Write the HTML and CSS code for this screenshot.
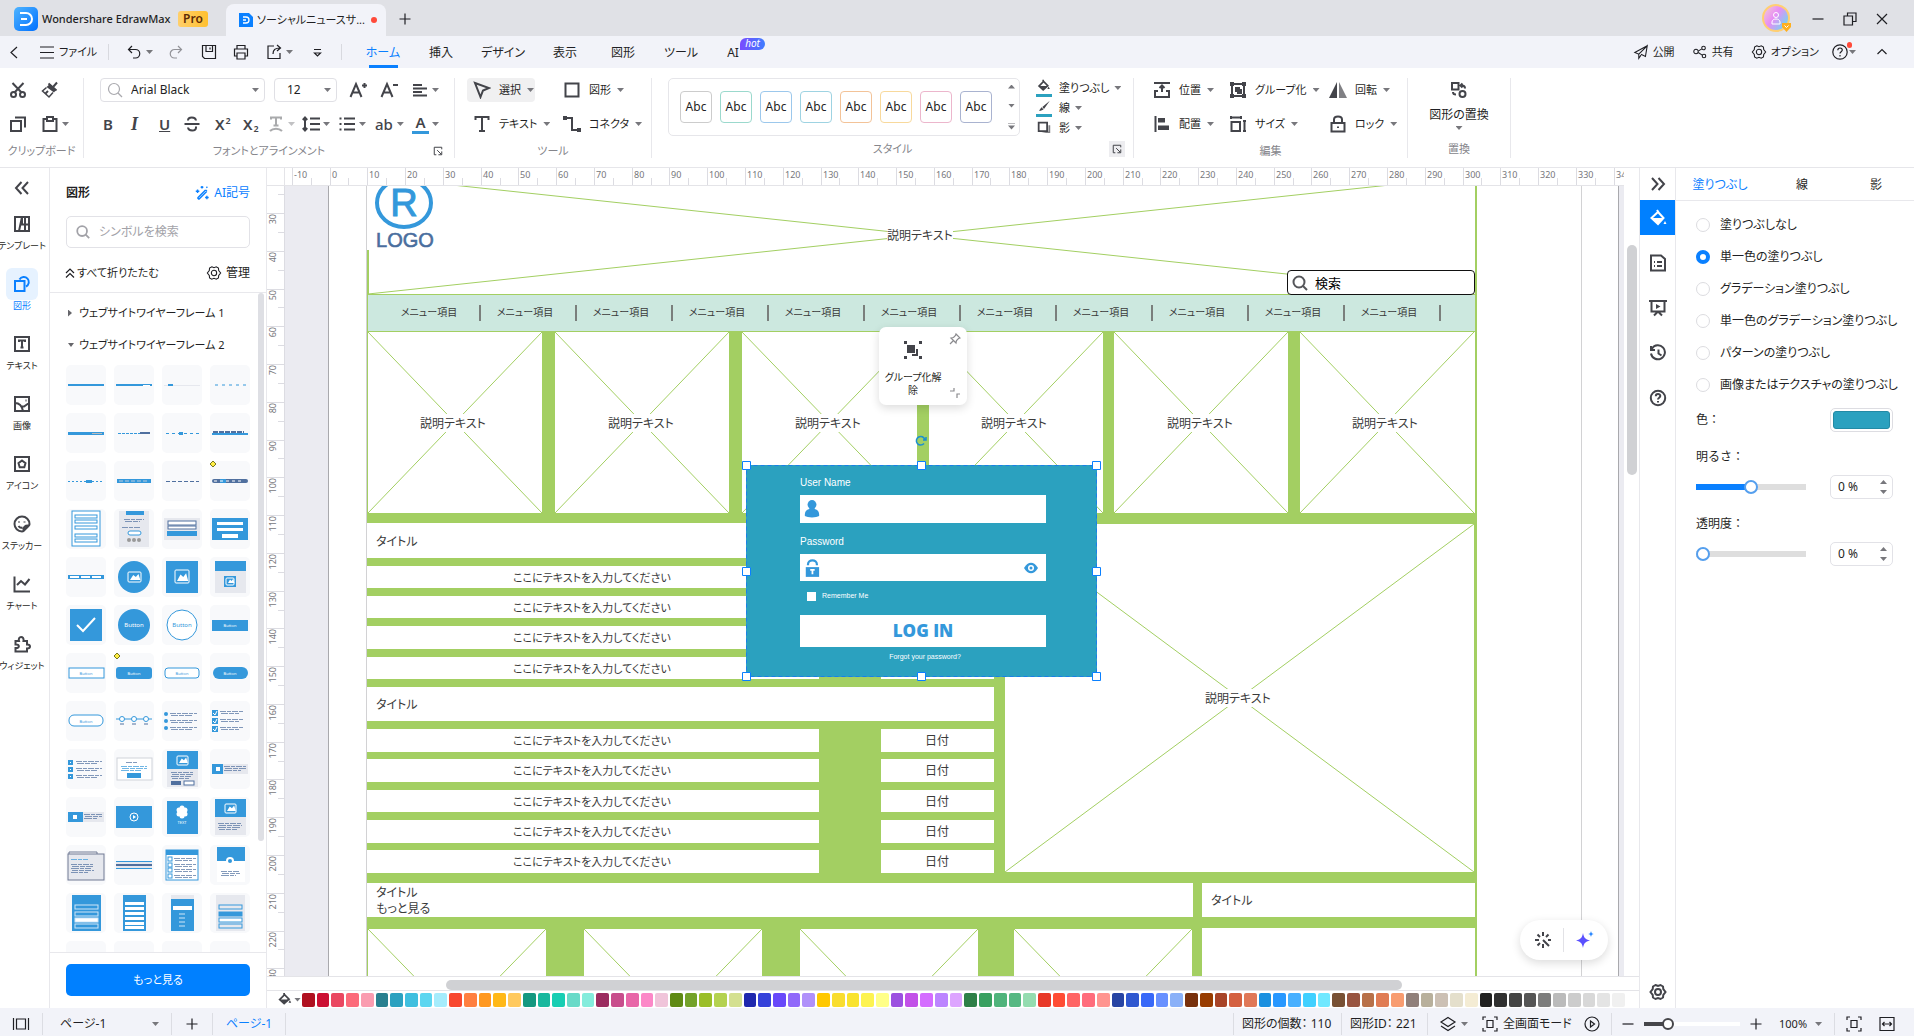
FILE: index.html
```html
<!DOCTYPE html>
<html lang="ja">
<head>
<meta charset="utf-8">
<title>Wondershare EdrawMax</title>
<link rel="stylesheet" href="styles.css">
</head>
<body>
<svg class="sprite" aria-hidden="true">
  <symbol id="back" viewBox="0 0 18 18"><path d="M12 4 6 9.500 12 15"/></symbol>
  <symbol id="menu" viewBox="0 0 18 18"><path d="M2 4h14M2 9.500h14M2 15h14"/></symbol>
  <symbol id="undo" viewBox="0 0 18 18"><path d="M7 3 3.500 6.500 7 10M4 6.500h6.500a4 4 0 0 1 0 8.500H8"/></symbol>
  <symbol id="redo" viewBox="0 0 18 18"><path d="M11 3l3.500 3.500L11 10M14 6.500H7.500a4 4 0 0 0 0 8.500H10"/></symbol>
  <symbol id="save" viewBox="0 0 18 18"><path d="M2.500 2.500h13v13h-11l-2-2zM6 2.500v6h6.500v-6M10 4.500v2"/></symbol>
  <symbol id="print" viewBox="0 0 18 18"><path d="M5 6V2.500h8V6M5 13H2.500V6h13v7H13M5 10h8v6H5z"/></symbol>
  <symbol id="export" viewBox="0 0 18 18"><path d="M9 3H3v12.500h12V10M8 11c0-4 2-6 7-6M12 2l3.500 3L12 8"/></symbol>
  <symbol id="more" viewBox="0 0 18 18"><path d="M6 6.500h7M6.500 10 9.500 13l3-3z"/></symbol>
  <symbol id="send" viewBox="0 0 18 18"><path d="M16 2 2 9.500l4.500 2L16 2l-2 12-5-2.500M6.500 11.500V16L9 12.500"/></symbol>
  <symbol id="share" viewBox="0 0 18 18"><circle cx="4.500" cy="8.500" r="2.500"/><circle cx="13" cy="4.500" r="2"/><circle cx="13.500" cy="13.500" r="2"/><path d="M7 8l4-2.500M7 9.500l4.500 3"/></symbol>
  <symbol id="gear" viewBox="0 0 18 18"><path d="M6.500 2 9 3l2.500-1 2.500 1.500.300 2.700L16.500 9l-2.200 2.800-.300 2.700-2.500 1.500L9 15l-2.500 1L4 14.500l-.300-2.700L1.500 9l2.200-2.800L4 3.500z"/><circle cx="9" cy="9" r="3"/></symbol>
  <symbol id="help" viewBox="0 0 18 18"><circle cx="9" cy="9" r="7.200"/><path d="M6.800 7.300c0-3 4.500-3 4.500-.2 0 1.700-2.300 1.600-2.300 3.400M9 12v1.500"/></symbol>
  <symbol id="up" viewBox="0 0 18 18"><path d="M4.500 11 9 6.500 13.500 11"/></symbol>
  <symbol id="cut" viewBox="0 0 18 18"><path d="M3.500 2 12.500 11.500M14.500 2 5.500 11.500"/><circle cx="4.500" cy="13.500" r="2.500"/><circle cx="13.500" cy="13.500" r="2.500"/></symbol>
  <symbol id="brush" viewBox="0 0 18 18"><path d="M16 1.500 12.500 5.500M7.500 2.500l8 7"/><path class="solid" d="M5.500 6 9 3l6 6-2 2.500z"/><path d="M5.500 6.500 1.500 10 8 16l4-4.500" stroke-width="1.500"/><path d="M4.500 12.500 7 10"/></symbol>
  <symbol id="copy" viewBox="0 0 18 18"><path d="M2 6h10v10H2zM6 2.500h10v10"/></symbol>
  <symbol id="paste" viewBox="0 0 18 18"><path d="M5.500 4H2.500v12h13V4h-3"/><path d="M6 2h6v4H6z"/></symbol>
  <symbol id="search" viewBox="0 0 18 18"><circle cx="8" cy="8" r="5.500"/><path d="m12 12 4 4"/></symbol>
  <symbol id="aup" viewBox="0 0 18 18"><path d="M1.500 16 7 3l5.500 13M3.500 11.500h7M13 4.500h5M15.500 2v5"/></symbol>
  <symbol id="adown" viewBox="0 0 18 18"><path d="M1.500 16 7 3l5.500 13M3.500 11.500h7M13 4h5"/></symbol>
  <symbol id="align" viewBox="0 0 18 18"><path d="M2 4h9M2 7.500h14M2 11h9M2 14.500h14"/></symbol>
  <symbol id="strike" viewBox="0 0 18 18"><path d="M1.500 9h15M13 5.500c-.5-4-8-4-8 0M5 12.500c.5 4 8 4 8 0V11.500"/></symbol>
  <symbol id="tcurve" viewBox="0 0 18 18"><path d="M4 4.500V2.500h10v2M9 2.500v8M6.500 10.500h5M3 16c3-3 9-3 12 0"/></symbol>
  <symbol id="lineh" viewBox="0 0 18 18"><path d="M8 3.500h10M8 9h10M8 14.500h10M3 3v12M.8 5 3 2.500 5.200 5M.8 13 3 15.500 5.200 13"/></symbol>
  <symbol id="list" viewBox="0 0 18 18"><path d="M6 3.500h11M6 9h11M6 14.500h11M1.500 3.500h2M1.500 9h2M1.500 14.500h2"/></symbol>
  <symbol id="cursor" viewBox="0 0 18 18"><path d="M2 2l14 5-6 2.500L7.500 16z"/></symbol>
  <symbol id="rect" viewBox="0 0 18 18"><path d="M2.500 2.500h13v13h-13z"/></symbol>
  <symbol id="bigt" viewBox="0 0 18 18"><path d="M2.500 5V2h13v3M9 2v14M6 16h6"/></symbol>
  <symbol id="conn" viewBox="0 0 18 18"><path d="M2 3h7v12h6"/><path class="solid" d="M0 1h4v4H0zM14 13h4v4h-4z"/></symbol>
  <symbol id="bucket" viewBox="0 0 18 18"><path d="M8 1v3M3 8.500 8.500 3l5 5-5.500 5z"/><path class="solid" d="M3.500 8.500H13L8 13zM14.500 9l1.500 3h-3z"/></symbol>
  <symbol id="pen" viewBox="0 0 18 18"><path class="solid" d="M16 2 7 9.500 9 12zM6 10l2.500 2.500L5 14H3z"/></symbol>
  <symbol id="shadow" viewBox="0 0 18 18"><path class="dim" d="M6 14.500h10V6h-2v7z"/><path d="M3 3h9.500v9.500H3z"/></symbol>
  <symbol id="place" viewBox="0 0 18 18"><path d="M1 2h16M9 11V5M6.500 7 9 4.500 11.500 7M5 10H2v6h14v-6h-3"/></symbol>
  <symbol id="alignl" viewBox="0 0 18 18"><path d="M2.500 1v16"/><path class="solid" d="M5 3h7v4.500H5zM5 10.500h11V15H5z"/></symbol>
  <symbol id="group" viewBox="0 0 18 18"><path d="M3 3h12v12H3z"/><path class="solid" d="M6 6h5v5H6zM1 1h4v4H1zM13 1h4v4h-4zM1 13h4v4H1zM13 13h4v4h-4z"/><path d="M12 8v4H8"/></symbol>
  <symbol id="ungroup" viewBox="0 0 18 18"><path class="solid" d="M3 4h8v8H3zM0 0h3v3H0zM15 0h3v3h-3zM0 15h3v3H0zM15 15h3v3h-3z"/><path d="M13 8v6H8"/></symbol>
  <symbol id="size" viewBox="0 0 18 18"><path d="M2.500 7h8.500v9H2.500zM2 2.500h10M2 1v3M12 1v3M15.500 6v10M14 6h3M14 16h3"/></symbol>
  <symbol id="flip" viewBox="0 0 18 18"><path class="solid" d="M8 1v16H0z"/><path class="dim" d="M10 1v16h8z"/></symbol>
  <symbol id="lock" viewBox="0 0 18 18"><path d="M2.500 8h13v8.500h-13zM5 8V4.500c0-4 8-4 8 0V8M9 11.500v1.500"/></symbol>
  <symbol id="swap" viewBox="0 0 18 18"><path d="M2 2h6.500v6.500H2zM12 4.500c2 0 3 1 3 3M12.500 2.500 10.500 4.500l2 2M6 13.500c-2 0-3-1-3-2.500"/><circle cx="12.500" cy="13" r="3"/></symbol>
  <symbol id="launch" viewBox="0 0 12 12"><path d="M10.500 4V1.500h-9v9H4M5 5l5 5M10.500 6.500v4h-4"/></symbol>
  <symbol id="dleft" viewBox="0 0 18 18"><path d="M8.500 3 3 9l5.500 6M15 3 9.500 9l5.500 6"/></symbol>
  <symbol id="dright" viewBox="0 0 18 18"><path d="M3 3l5.500 6L3 15M9.500 3 15 9l-5.500 6"/></symbol>
  <symbol id="dup" viewBox="0 0 12 12"><path d="M2 6l4-4 4 4M2 10.500l4-4 4 4"/></symbol>
  <symbol id="tmpl" viewBox="0 0 18 18"><path d="M2 2h14v14H2zM9 2 6 16M9 2.500V9M12 2v14M8 9.500h8"/></symbol>
  <symbol id="shapes" viewBox="0 0 18 18"><path d="M2 6h9.500v10H2z"/><path d="M6.500 4.500A5 5 0 1 1 13 11.500"/></symbol>
  <symbol id="text" viewBox="0 0 18 18"><path d="M2 2h14v14H2zM6 7V5.500h6V7M9 5.500v6.500M7.500 12.500h3"/></symbol>
  <symbol id="image" viewBox="0 0 18 18"><path d="M2 2h14v14H2zM2 8c4 0 7 3 8 8M8 11.500l3 0 5-3.500M12.500 5.500h1"/></symbol>
  <symbol id="icon" viewBox="0 0 18 18"><path d="M2 2h14v14H2zM9 5.500l3.500 2.700-1.200 4H6.700l-1.200-4z"/></symbol>
  <symbol id="sticker" viewBox="0 0 18 18"><path d="M16.500 9A7.500 7.500 0 1 0 9 16.500c1 0 1.500-.500 1.500-1.500 0-3 1.500-4.500 4.500-4.500 1 0 1.500-.500 1.500-1.500zM10.500 16 16 10.500M6 6.500v1M11.500 6.500v1M5.500 11c1 1.500 2.500 2 4 1.500"/></symbol>
  <symbol id="chart" viewBox="0 0 18 18"><path d="M1.500 1.500v15H17M4 10l4-4 4 3.500L16.500 4"/></symbol>
  <symbol id="puzzle" viewBox="0 0 18 18"><path d="M2.500 6H6c-1.500-5.500 5.500-5.500 4.500 0H14v3.500c4 0 4 4 0 4V16.500H2.500V13c4.500.500 4.500-4 0-3.500z"/></symbol>
  <symbol id="wand" viewBox="0 0 18 18"><path d="m4 14.500 9-9M5.500 16l9-9M13 5.500 14.500 7M4 14.500 5.500 16M4 5v4M2 7h4M14.500 12v4M12.500 14h4M9 1v3M7.500 2.500h3M14 2l1 1"/></symbol>
  <symbol id="fillw" viewBox="0 0 18 18"><path d="M2.500 9 9 3l5.500 6L9 15zM8 1l2 3"/><path class="solid" d="M3 9h11.500L9 15zM16 12l1.500 3h-3z"/></symbol>
  <symbol id="doc" viewBox="0 0 18 18"><path d="M2 1.500h10L16 5v11.500H2zM5 8h1M8 8h5M5 12h1M8 12h5"/></symbol>
  <symbol id="present" viewBox="0 0 18 18"><path d="M0 2h18M2.500 2v10.500h13V2M9 12.500l-4 4M9 12.500l4 4"/><path class="solid" d="M7 5l4.500 2.500L7 10z"/></symbol>
  <symbol id="history" viewBox="0 0 18 18"><path d="M3 4.500a7 7 0 1 1-1 5M2 2v4h4M9.500 5.500v4l3 2"/></symbol>
  <symbol id="pages" viewBox="0 0 18 18"><path d="M1.500 3v12M16.500 3v12M4.500 4h9v10h-9z"/></symbol>
  <symbol id="plus" viewBox="0 0 18 18"><path d="M9 3.500v11M3.500 9h11"/></symbol>
  <symbol id="minus" viewBox="0 0 18 18"><path d="M3.500 9h11"/></symbol>
  <symbol id="layers" viewBox="0 0 18 18"><path d="M9 2.500 16 7l-7 4.500L2 7zM2 11l7 4.500 7-4.500"/></symbol>
  <symbol id="fit" viewBox="0 0 18 18"><path d="M2 5V2h3M13 2h3v3M16 13v3h-3M5 16H2v-3M6 5.500h6v7H6z"/></symbol>
  <symbol id="play" viewBox="0 0 18 18"><circle cx="9" cy="9" r="7"/><path d="M7.500 6l4 3-4 3z"/></symbol>
  <symbol id="wide" viewBox="0 0 18 18"><path d="M2 2.500h14v13H2zM4.500 9h9M6.500 7l-2 2 2 2M11.500 7l2 2-2 2"/></symbol>
  <symbol id="restore" viewBox="0 0 18 18"><path d="M3 6h8.500v9H3zM6.500 6V3H15v8.500h-3.500"/></symbol>
  <symbol id="close" viewBox="0 0 18 18"><path d="m4 4 10 10M14 4 4 14"/></symbol>
  <symbol id="pin" viewBox="0 0 12 12"><path d="M7 1l4 4-1.500.5-2 2L7 10 2 5l2.500-.5 2-2zM4.500 7.500 1 11"/></symbol>
  <symbol id="spark" viewBox="0 0 18 18"><path d="M9 1v4M9 13v4M1 9h4M14 9h3M3.500 3.500 6 6M14.500 3.500 12 6M3.500 14.500 6 12M9 9l6 6"/></symbol>
</svg>

<header class="titlebar">
  <svg class="logo" viewBox="0 0 24 24"><defs><linearGradient id="lg" x2="1" y2="1"><stop stop-color="#4fb4ff"/><stop offset="1" stop-color="#0070ff"/></linearGradient></defs><rect width="24" height="24" rx="5" fill="url(#lg)"/><path d="M6 6h6a6 6 0 0 1 0 12H6M7 12h6" fill="none" stroke="#fff" stroke-width="2"/></svg>
  <span class="appname">Wondershare EdrawMax</span><span class="pro">Pro</span>
  <div class="doctab">
    <svg class="docicon" viewBox="0 0 14 16"><path d="M0 1h10l4 4v10H0z" fill="#0a80ff"/><path d="M4 5h3a3 3 0 0 1 0 6H4M4 8h3" fill="none" stroke="#fff" stroke-width="1.300"/></svg>
    <span class="docname">ソーシャルニュースサ...</span><i class="dirty"></i>
  </div>
  <button class="newtab" aria-label="新しいタブ"><svg class="i"><use href="#plus"/></svg></button>
  <div class="winctl">
    <svg class="avatar" viewBox="0 0 34 30"><defs><linearGradient id="av" x2="1" y2=".7"><stop stop-color="#f5d4ce"/><stop offset=".5" stop-color="#e78df5"/><stop offset="1" stop-color="#6fd8ee"/></linearGradient></defs><circle cx="15" cy="14" r="13" fill="url(#av)" stroke="#ffcf73" stroke-width="2"/><circle cx="15" cy="11" r="2.500" fill="none" stroke="#fff"/><path d="M11 20v-2c0-4 8-4 8 0v2z" fill="none" stroke="#fff"/><path d="M21 19h9v4l-4.500 5L21 23z" fill="#ffb01f"/><path d="m23.500 21.500 2 2 2-2" stroke="#fff" fill="none"/></svg>
    <button aria-label="最小化"><svg class="i"><use href="#minus"/></svg></button>
    <button aria-label="元に戻す"><svg class="i"><use href="#restore"/></svg></button>
    <button aria-label="閉じる"><svg class="i"><use href="#close"/></svg></button>
  </div>
</header>

<div class="menubar">
  <div class="quick">
    <button aria-label="戻る"><svg class="i"><use href="#back"/></svg></button>
    <button class="file"><svg class="i"><use href="#menu"/></svg>ファイル</button>
    <i class="vsep"></i>
    <button aria-label="元に戻す"><svg class="i"><use href="#undo"/></svg><i class="caret"></i></button>
    <button aria-label="やり直し" class="off"><svg class="i"><use href="#redo"/></svg></button>
    <button aria-label="保存"><svg class="i"><use href="#save"/></svg></button>
    <button aria-label="印刷"><svg class="i"><use href="#print"/></svg></button>
    <button aria-label="エクスポート"><svg class="i"><use href="#export"/></svg><i class="caret"></i></button>
    <button aria-label="その他"><svg class="i"><use href="#more"/></svg></button>
    <i class="vsep"></i>
  </div>
  <nav class="menus">
    <a href="#" class="on">ホーム</a><a href="#">挿入</a><a href="#">デザイン</a><a href="#">表示</a><a href="#">図形</a><a href="#">ツール</a><a href="#" class="ai">AI<em>hot</em></a>
  </nav>
  <div class="menuright">
    <button><svg class="i s"><use href="#send"/></svg>公開</button>
    <button><svg class="i s"><use href="#share"/></svg>共有</button>
    <button><svg class="i s"><use href="#gear"/></svg>オプション</button>
    <button class="helpb" aria-label="ヘルプ"><svg class="i"><use href="#help"/></svg><i class="caret"></i></button>
    <button class="foldb" aria-label="折りたたむ"><svg class="i"><use href="#up"/></svg></button>
  </div>
</div>

<div class="ribbon">
  <section class="grp clip">
    <div class="rr"><button aria-label="切り取り"><svg class="i b"><use href="#cut"/></svg></button><button aria-label="書式のコピー"><svg class="i b"><use href="#brush"/></svg></button></div>
    <div class="rr"><button aria-label="コピー"><svg class="i b"><use href="#copy"/></svg></button><button aria-label="貼り付け"><svg class="i b"><use href="#paste"/></svg><i class="caret"></i></button></div>
    <div class="gl"><span>クリップボード</span></div>
  </section>
  <section class="grp font">
    <div class="rr1">
      <label class="combo"><svg class="i"><use href="#search"/></svg><select aria-label="フォント"><option>Arial Black</option></select><i class="caret"></i></label>
      <label class="combo sz"><select aria-label="サイズ"><option>12</option></select><i class="caret"></i></label>
      <div class="fa"><button aria-label="拡大"><svg class="i b"><use href="#aup"/></svg></button><button aria-label="縮小"><svg class="i b"><use href="#adown"/></svg></button><button aria-label="配置"><svg class="i b"><use href="#align"/></svg><i class="caret"></i></button></div>
    </div>
    <div class="rr2">
      <button class="tx">B</button><button class="tx it">I</button><button class="tx un">U</button><button aria-label="取り消し線"><svg class="i b"><use href="#strike"/></svg></button><button class="tx">X<sup>2</sup></button><button class="tx">X<sub>2</sub></button>
      <button class="off" aria-label="文字の曲線"><svg class="i b"><use href="#tcurve"/></svg><i class="caret"></i></button><button aria-label="行間"><svg class="i b"><use href="#lineh"/></svg><i class="caret"></i></button><button aria-label="箇条書き"><svg class="i b"><use href="#list"/></svg><i class="caret"></i></button><button class="tx">ab<i class="caret"></i></button><button class="tx"><span class="acol">A</span><i class="caret"></i></button>
    </div>
    <div class="gl"><span>フォントとアラインメント</span><button class="launch" aria-label="詳細"><svg class="i l"><use href="#launch"/></svg></button></div>
  </section>
  <section class="grp tools">
    <div class="rr"><button class="sel"><svg class="i b"><use href="#cursor"/></svg>選択<i class="caret"></i></button><button><svg class="i b"><use href="#rect"/></svg>図形<i class="caret"></i></button></div>
    <div class="rr"><button><svg class="i b"><use href="#bigt"/></svg>テキスト<i class="caret"></i></button><button><svg class="i b"><use href="#conn"/></svg>コネクタ<i class="caret"></i></button></div>
    <div class="gl"><span>ツール</span></div>
  </section>
  <section class="grp style">
    <div class="sty">
      <div class="presets">
        <button class="p1">Abc</button><button class="p2">Abc</button><button class="p3">Abc</button><button class="p4">Abc</button><button class="p5">Abc</button><button class="p6">Abc</button><button class="p7">Abc</button><button class="p8">Abc</button>
        <div class="arrows"><i class="caret upc"></i><i class="caret"></i><i class="caret bar"></i></div>
      </div>
      <div class="fillcol">
        <button><svg class="i b ul"><use href="#bucket"/></svg>塗りつぶし<i class="caret"></i></button>
        <button><svg class="i b ul"><use href="#pen"/></svg>線<i class="caret"></i></button>
        <button><svg class="i b"><use href="#shadow"/></svg>影<i class="caret"></i></button>
      </div>
    </div>
    <div class="gl"><span>スタイル</span><button class="launch hov" aria-label="詳細"><svg class="i l"><use href="#launch"/></svg></button></div>
  </section>
  <section class="grp edit">
    <div class="rr"><button><svg class="i b"><use href="#place"/></svg>位置<i class="caret"></i></button><button><svg class="i b"><use href="#group"/></svg>グループ化<i class="caret"></i></button><button><svg class="i b"><use href="#flip"/></svg>回転<i class="caret"></i></button></div>
    <div class="rr"><button><svg class="i b"><use href="#alignl"/></svg>配置<i class="caret"></i></button><button><svg class="i b"><use href="#size"/></svg>サイズ<i class="caret"></i></button><button><svg class="i b"><use href="#lock"/></svg>ロック<i class="caret"></i></button></div>
    <div class="gl"><span>編集</span></div>
  </section>
  <section class="grp rep">
    <button class="big"><svg class="i b"><use href="#swap"/></svg><span>図形の置換</span><i class="caret"></i></button>
    <div class="gl"><span>置換</span></div>
  </section>
</div>

<main class="main">
  <nav class="rail">
    <button class="fold" aria-label="折りたたむ"><svg class="i b"><use href="#dleft"/></svg></button>
    <button><span class="ri"><svg class="i b"><use href="#tmpl"/></svg></span>テンプレート</button>
    <button class="on"><span class="ri"><svg class="i b"><use href="#shapes"/></svg></span>図形</button>
    <button><span class="ri"><svg class="i b"><use href="#text"/></svg></span>テキスト</button>
    <button><span class="ri"><svg class="i b"><use href="#image"/></svg></span>画像</button>
    <button><span class="ri"><svg class="i b"><use href="#icon"/></svg></span>アイコン</button>
    <button><span class="ri"><svg class="i b"><use href="#sticker"/></svg></span>ステッカー</button>
    <button><span class="ri"><svg class="i b"><use href="#chart"/></svg></span>チャート</button>
    <button><span class="ri"><svg class="i b"><use href="#puzzle"/></svg></span>ウィジェット</button>
  </nav>

  <aside class="library">
    <div class="lhead"><h2>図形</h2><a href="#"><svg class="i s b"><use href="#wand"/></svg>AI記号</a></div>
    <label class="lsearch"><svg class="i b"><use href="#search"/></svg><input type="text" aria-label="検索" placeholder="シンボルを検索"></label>
    <div class="ltools"><button class="fa2"><svg class="i l"><use href="#dup"/></svg>すべて折りたたむ</button><button><svg class="i s"><use href="#gear"/></svg>管理</button></div>
    <div class="lscroll">
      <button class="cat"><i class="tri"></i>ウェブサイトワイヤーフレーム 1</button>
      <button class="cat"><i class="tri down"></i>ウェブサイトワイヤーフレーム 2</button>
      <div class="thumbs" id="thumbs"></div>
      <i class="lbar"></i>
    </div>
    <div class="lfoot"><button>もっと見る</button></div>
  </aside>

  <div class="work">
    <div class="corner"></div>
    <svg class="hruler" id="hruler"></svg>
    <svg class="vruler" id="vruler"></svg>
    <div class="canvas">
      <svg class="page" width="1339" height="790" viewBox="285 186 1339 790" id="page">
        <rect x="328" y="180" width="1291" height="800" fill="#fff"/>
        <path d="M328.500 180v800M1618.500 180v800" stroke="#a9a9ad"/>
        <path d="M366.500 180v800M1581.500 180v800" stroke="#d2d2d4"/>
        <g class="g">
          <path d="M367 250h2v45h-2zM1475 180h2v800h-2z"/>
          <path d="M367 513h1108v467H367z"/>
          <path d="M542 332h13v182h-13zM729 332h13v182h-13zM917 332h12v182h-12zM1103 332h11v182h-11zM1288 332h12v182h-12z"/>
        </g>
        <rect x="367" y="294" width="1108" height="38" fill="#cce8df"/>
        <path class="ln" d="M367 294.500h1108M367 331.500h1108M367.500 294v219"/>
        <g class="w">
          <path d="M367 523h627v35H367zM367 687h627v34H367zM1005 524h469v348h-469zM367 883h826v34H367zM1202 883h273v34h-273zM1202 928h273v52h-273z"/>
          <path d="M368 929h178v51H368zM584 929h178v51H584zM800 929h178v51H800zM1014 929h178v51h-178z"/>
        </g>
        <path class="ln" d="M368 176 1474 294M368 294 1474 176"/>
        <path class="ln" d="M368 332 542 513M542 332 368 513M555 332 729 513M729 332 555 513M742 332 917 513M917 332 742 513M929 332 1103 513M1103 332 929 513M1114 332 1288 513M1288 332 1114 513M1300 332 1474 513M1474 332 1300 513M1474 524 1005 872M1005 524 1474 872"/>
        <path class="ln" d="M368 929 546 1112M546 929 368 1112M584 929 762 1112M762 929 584 1112M800 929 978 1112M978 929 800 1112M1014 929 1192 1112M1192 929 1014 1112"/>
        <ellipse cx="404" cy="203" rx="27" ry="24" fill="none" stroke="#3498db" stroke-width="4"/>
        <text x="404" y="216" class="r">R</text>
        <text x="405" y="247" class="lg">LOGO</text>
        <g class="w" id="rows"></g>
        <g id="dtext"></g>
        <text x="376" y="546">タイトル</text><text x="376" y="709">タイトル</text>
        <text x="376" y="897">タイトル</text><text x="376" y="913">もっと見る</text><text x="1211" y="905">タイトル</text>
      </svg>

      <label class="wsearch"><svg class="i b"><use href="#search"/></svg><input type="text" value="検索" aria-label="検索"></label>

      <form class="login">
        <label for="un">User Name</label>
        <div class="fld"><svg viewBox="0 0 18 20"><circle cx="9" cy="5" r="5"/><path d="M6 8h6v2c4 1 5.500 4 5 8-3 2-13 2-16 0-.5-4 1-7 5-8z"/></svg><input id="un" type="text"></div>
        <label for="pw">Password</label>
        <div class="fld f2"><svg viewBox="0 0 18 20"><path d="M2 9h15v11H2z"/><path d="M4.500 7V6c0-6 10-6 10 0v1" fill="none" stroke="#3498db" stroke-width="2.500"/><path d="M7 11h5v2h-1.500v4h-2v-4H7z" fill="#fff"/></svg><input id="pw" type="password"><svg class="eye" viewBox="0 0 14 12"><path d="M0 6c4-7 10-7 14 0-4 7-10 7-14 0z"/><circle cx="7" cy="6" r="3" fill="#fff"/><circle cx="7" cy="6" r="1.500"/></svg></div>
        <label class="rem"><input type="checkbox">Remember Me</label>
        <button type="button">LOG IN</button>
        <a href="#">Forgot your password?</a>
      </form>
      <svg class="handles" viewBox="0 0 359 220"><path d="M4.500 4.500h350v211h-350z" fill="none" stroke="#1a7fe8" stroke-dasharray="4 3"/><g fill="#fff" stroke="#0a80ff"><path d="M.5.500h8v8h-8zM175.500.500h8v8h-8zM350.500.500h8v8h-8zM.5 106.500h8v8h-8zM350.500 106.500h8v8h-8zM.5 211.500h8v8h-8zM175.500 211.500h8v8h-8zM350.500 211.500h8v8h-8z"/></g></svg>
      <svg class="rot" viewBox="0 0 12 12"><path d="M9 9.500a4.300 4.300 0 1 1 .8-4M11 3v3H8"/></svg>

      <div class="pop">
        <svg class="i pin"><use href="#pin"/></svg>
        <button><svg class="i b"><use href="#ungroup"/></svg>グループ化解<br>除</button>
        <svg class="i shr" viewBox="0 0 12 12"><path d="M1 4h4V1M11 7H8v4"/></svg>
      </div>
      <div class="aifloat"><button aria-label="効果"><svg class="i b"><use href="#spark"/></svg></button><i></i><button aria-label="AI"><svg viewBox="0 0 20 20"><path d="M8 3c1 5 2 6 7 7.500-5 1.500-6 2.500-7 7.500-1-5-2-6-7-7.500C6 9 7 8 8 3z" fill="#5a50ff"/><path d="M16 1c.4 2 1 2.600 3 3-2 .4-2.600 1-3 3-.4-2-1-2.600-3-3 2-.4 2.600-1 3-3z" fill="#2f8bff"/></svg></button></div>
    </div>
    <div class="vscroll"><i></i></div>
    <div class="hscroll"><i></i></div>
    <div class="colors"><button aria-label="塗りつぶし"><svg class="i s b"><use href="#bucket"/></svg><i class="caret"></i></button><div class="sw" id="sw"></div></div>
  </div>

  <nav class="rail2">
    <button aria-label="展開"><svg class="i b"><use href="#dright"/></svg></button>
    <button class="on" aria-label="塗りつぶし"><svg class="i b"><use href="#fillw"/></svg></button>
    <button aria-label="ページ"><svg class="i b"><use href="#doc"/></svg></button>
    <button aria-label="プレゼン"><svg class="i b"><use href="#present"/></svg></button>
    <button aria-label="履歴"><svg class="i b"><use href="#history"/></svg></button>
    <button aria-label="ヘルプ"><svg class="i b"><use href="#help"/></svg></button>
    <button class="end" aria-label="設定"><svg class="i b"><use href="#gear"/></svg></button>
  </nav>

  <aside class="props">
    <div class="ptabs"><a href="#" class="on">塗りつぶし</a><a href="#">線</a><a href="#">影</a></div>
    <div class="pbody">
      <label class="rad"><input type="radio" name="fill">塗りつぶしなし</label>
      <label class="rad"><input type="radio" name="fill" checked>単一色の塗りつぶし</label>
      <label class="rad"><input type="radio" name="fill">グラデーション塗りつぶし</label>
      <label class="rad"><input type="radio" name="fill">単一色のグラデーション塗りつぶし</label>
      <label class="rad"><input type="radio" name="fill">パターンの塗りつぶし</label>
      <label class="rad"><input type="radio" name="fill">画像またはテクスチャの塗りつぶし</label>
      <div class="prow c"><span>色：</span><button class="cbtn" aria-label="色"><i></i></button></div>
      <label class="pl" for="br">明るさ：</label>
      <div class="prow"><input type="range" id="br" class="half" value="50"><span class="spin"><input type="text" value="0 %" aria-label="明るさ"><span><i class="caret upc"></i><i class="caret"></i></span></span></div>
      <label class="pl" for="op">透明度：</label>
      <div class="prow"><input type="range" id="op" value="0"><span class="spin"><input type="text" value="0 %" aria-label="透明度"><span><i class="caret upc"></i><i class="caret"></i></span></span></div>
    </div>
  </aside>
</main>

<footer class="status">
  <button class="c1" aria-label="ページ一覧"><svg class="i"><use href="#pages"/></svg></button>
  <label class="c2"><select aria-label="ページ"><option>ページ-1</option></select><i class="caret"></i></label>
  <button class="c3" aria-label="ページの追加"><svg class="i"><use href="#plus"/></svg></button>
  <a class="c4" href="#">ページ-1</a>
  <span class="cell n1">図形の個数： 110</span>
  <span class="cell n2">図形ID： 221</span>
  <div class="cell view"><button aria-label="レイヤー"><svg class="i"><use href="#layers"/></svg><i class="caret"></i></button><button><svg class="i"><use href="#fit"/></svg>全画面モード</button><button aria-label="再生"><svg class="i"><use href="#play"/></svg></button></div>
  <div class="cell zoomc"><button aria-label="縮小"><svg class="i"><use href="#minus"/></svg></button><input type="range" value="22" aria-label="ズーム"><button aria-label="拡大"><svg class="i"><use href="#plus"/></svg></button><button>100%<i class="caret"></i></button></div>
  <div class="cell fits"><button aria-label="全体表示"><svg class="i"><use href="#fit"/></svg></button><button aria-label="幅に合わせる"><svg class="i"><use href="#wide"/></svg></button></div>
</footer>
<script src="app.js"></script>
</body>
</html>
```
FILE: styles.css
```css
* { box-sizing: border-box; }
body { margin: 0; height: 100vh; display: grid; grid-template-rows: 36px 32px 100px 1fr 28px; font: 12px/16px "Noto Sans", "Noto Sans CJK JP", sans-serif; font-feature-settings: "palt"; color: #1f1f24; background: #fff; overflow: hidden; }
button, input, select { font: inherit; font-feature-settings: inherit; color: inherit; border: 0; background: none; padding: 0; margin: 0; outline: 0; }
button { display: flex; align-items: center; white-space: nowrap; }
a { color: inherit; text-decoration: none; }
select { appearance: none; }
.sprite { position: absolute; width: 0; height: 0; }
.i { width: 18px; height: 18px; flex: none; fill: none; stroke: currentColor; stroke-width: 1.2; }
.i.b { stroke-width: 2; color: #43444a; }
.i.s { width: 16px; height: 16px; }
.i.l { width: 12px; height: 12px; }
.solid { fill: currentColor; stroke: none; }
.dim { fill: #808084; stroke: none; }
.caret { flex: none; width: 7px; height: 4px; background: #77777c; clip-path: polygon(0 0, 100% 0, 50% 100%); }
.upc { clip-path: polygon(0 100%, 100% 100%, 50% 0); }
.off { opacity: .45; }
.vsep { width: 1px; height: 16px; background: #d8d9df; }

.titlebar { background: #e0e1e6; display: flex; align-items: center; padding: 2px 0 0 14px; }
.logo { width: 24px; height: 24px; }
.appname { width: 132px; margin: 0 4px; white-space: nowrap; font-size: 11px; font-weight: 500; }
.pro { width: 30px; height: 16px; line-height: 16px; text-align: center; background: linear-gradient(90deg, #ffcf6b, #ffc02f); border-radius: 3px; color: #5d2a05; font-weight: 600; }
.doctab { width: 160px; height: 32px; margin-left: 18px; align-self: flex-end; background: #f2f3f9; border-radius: 8px 8px 0 0; display: flex; align-items: center; padding: 0 9px 0 13px; gap: 4px; }
.docicon { width: 14px; height: 16px; flex: none; }
.docname { flex: 1; font-size: 11px; white-space: nowrap; }
.dirty { width: 6px; height: 6px; border-radius: 3px; background: #ff4a3a; }
.newtab { margin-left: 10px; }
.winctl { margin-left: auto; display: flex; align-items: center; gap: 14px; padding-right: 23px; }
.avatar { width: 34px; height: 30px; }

.menubar { background: #f2f3f9; display: flex; align-items: center; }
.quick { display: grid; grid-template-columns: 33px 70px 17px 42px 33px 32px 33px 43px 33px 13px; padding-left: 5px; align-items: center; }
.quick button { gap: 3px; }
.file { font-size: 11px; }
.menus { display: flex; }
.menus a { width: 58px; height: 32px; line-height: 33px; text-align: center; position: relative; }
.menus a:nth-child(3) { width: 66px; }
.menus a:nth-child(7) { width: 46px; }
.menus .on { color: #0a80ff; }
.menus .on::after { content: ""; position: absolute; left: 15px; right: 14px; bottom: 0; height: 3px; background: #0a80ff; }
.menus em { position: absolute; left: 30px; top: 2px; width: 25px; height: 12px; font-size: 10px; line-height: 11px; color: #fff; background: linear-gradient(90deg, #7a4bff, #3f7dff); border-radius: 6px 6px 6px 0; }
.menuright { margin-left: auto; display: flex; align-items: center; gap: 17px; padding-right: 23px; font-size: 11px; }
.menuright button { gap: 4px; }
.helpb { position: relative; margin-left: -5px; }
.helpb::before { content: ""; position: absolute; left: 16px; top: -1px; width: 5px; height: 6px; border-radius: 3px; background: #ff4a3a; }
.menuright .helpb { gap: 0; }

.ribbon { display: flex; padding-top: 10px; border-bottom: 1px solid #e6e6ea; background: #fff; }
.grp { height: 80px; border-right: 1px solid #e8e8ec; display: flex; flex-direction: column; }
.rr, .rr1, .rr2 { height: 24px; margin-bottom: 10px; align-items: center; }
.rr { display: grid; font-size: 11px; }
.rr button { gap: 8px; height: 24px; }
.gl { height: 18px; margin-top: -3px; display: flex; align-items: center; color: #85858b; font-size: 11px; }
.gl span { flex: 1; text-align: center; }
.launch { width: 16px; height: 16px; justify-content: center; margin: 0 8px 0 -24px; }
.launch .i { color: #43444a; width: 10px; height: 10px; }
.hov { background: #ededf0; }
.clip { width: 84px; }
.clip .rr { grid-template-columns: 32px 1fr; padding-left: 9px; }
.clip .rr button { gap: 3px; }
.font { width: 371px; }
.rr1 { display: flex; padding-left: 16px; }
.combo { width: 165px; height: 24px; border: 1px solid #e0e0e5; border-radius: 4px; display: flex; align-items: center; padding: 0 5px; gap: 7px; color: #a9a9ae; }
.combo select { flex: 1; min-width: 0; color: #1f1f24; }
.combo.sz { width: 63px; margin-left: 9px; padding-left: 12px; }
.fa { display: flex; gap: 13px; margin-left: 12px; }
.fa button { gap: 3px; }
.rr2 { display: grid; grid-template-columns: repeat(6, 28px) 35px 36px 37px 37px 30px; padding-left: 15px; }
.rr2 button { gap: 3px; }
.tx { font-size: 15px; font-weight: 600; color: #43444a; padding-left: 4px; height: 24px; }
.rr2 .tx { gap: 1px; }
.tx sup, .tx sub { font-size: 9px; line-height: 9px; }
.tx sup { align-self: flex-start; margin-top: 4px; }
.tx sub { align-self: flex-end; margin-bottom: 3px; }
.it { font-style: italic; font-family: "Liberation Serif", serif; font-size: 18px; }
.un { text-decoration: underline; }
.rr2 .tx:nth-child(10) { padding-left: 0; gap: 4px; font-weight: 500; }
.rr2 .tx:nth-child(11) { padding-left: 0; gap: 3px; }
.acol { width: 17px; line-height: 17px; text-align: center; border-bottom: 3px solid #3498db; }
.tools { width: 197px; }
.tools .rr { grid-template-columns: 90px 1fr; padding-left: 12px; }
.tools button { padding: 0 6px; }
.tools .rr .sel { background: #f0f0f1; border-radius: 4px; width: 68px; }
.style { width: 482px; }
.sty { display: flex; padding-left: 16px; height: 68px; }
.presets { width: 352px; height: 58px; border: 1px solid #e6e6ea; border-radius: 5px; display: flex; align-items: center; gap: 8px; padding-left: 11px; }
.presets button { width: 32px; height: 32px; border: 1px solid #ccc; border-radius: 4px; justify-content: center; }
.presets .p2 { border-color: #9bd9cd; }
.presets .p3 { border-color: #9cc8ec; }
.presets .p4 { border-color: #9ed3e2; }
.presets .p5 { border-color: #f3c398; }
.presets .p6 { border-color: #f8d99c; }
.presets .p7 { border-color: #ecb6cc; }
.presets .p8 { border-color: #a9b3d0; }
.arrows { display: flex; flex-direction: column; gap: 15px; margin-left: 8px; }
.arrows .bar { height: 7px; clip-path: polygon(0 0, 100% 0, 100% 1px, 0 1px, 0 3px, 100% 3px, 50% 100%, 0 3px); }
.fillcol { padding-left: 16px; font-size: 11px; }
.fillcol button { height: 20px; gap: 7px; }
.fillcol .i { width: 16px; height: 16px; }
.fillcol .ul { height: 18px; border-bottom: 3px solid #2ba1bf; }
.edit { width: 274px; }
.edit .rr { grid-template-columns: 76px 100px 1fr; padding-left: 19px; }
.edit .caret, .tools .caret, .fillcol .caret { margin-left: -2px; }
.rep { width: 103px; }
.big { flex-direction: column; gap: 8px; margin-top: 3px; width: 100%; height: 65px; justify-content: flex-start; }
.big .caret { margin-top: -5px; }

.main { display: grid; grid-template-columns: 50px 217px 1fr 37px 238px; min-height: 0; }
.rail { border-right: 1px solid #e8e8ec; display: flex; flex-direction: column; align-items: center; }
.rail button { height: 60px; flex-direction: column; font-size: 9px; line-height: 12px; margin-right: 5px; }
.rail .fold { height: 40px; justify-content: center; }
.ri { width: 32px; height: 32px; border-radius: 6px; display: grid; place-items: center; }
.on .ri { background: #e6f2ff; }
.rail .on, .rail .on .i { color: #0a80ff; }
.library { border-right: 1px solid #e8e8ec; display: flex; flex-direction: column; min-height: 0; }
.lhead { display: flex; justify-content: space-between; align-items: center; height: 48px; padding: 2px 16px 0; }
.lhead h2 { margin: 0; font-size: 12px; font-weight: 600; }
.lhead a { color: #0a80ff; display: flex; gap: 4px; }
.lhead .i { color: #0a80ff; stroke-width: 1.600; }
.lsearch { flex: none; height: 32px; margin: 0 16px; border: 1px solid #e2e2e7; border-radius: 5px; display: flex; align-items: center; gap: 8px; padding-left: 8px; }
.lsearch .i { color: #a2a2a8; width: 16px; height: 16px; }
.lsearch input { flex: 1; min-width: 0; }
.lsearch input::placeholder { color: #a2a2a8; }
.ltools { flex: none; height: 45px; border-bottom: 1px solid #e8e8ec; display: flex; justify-content: space-between; align-items: center; padding: 5px 16px 0 14px; }
.ltools button { gap: 4px; }
.ltools .fa2 { font-size: 11px; gap: 1px; }
.lscroll { flex: 1; min-height: 0; overflow: hidden; position: relative; padding-top: 4px; }
.cat { height: 32px; padding-left: 18px; gap: 5px; font-size: 11px; }
.tri { width: 4px; height: 7px; margin: 0 2px 0 0; background: #66666b; clip-path: polygon(0 0, 100% 50%, 0 100%); }
.tri.down { width: 6px; height: 4px; margin: 0; clip-path: polygon(0 0, 100% 0, 50% 100%); }
.thumbs { display: grid; grid-template-columns: repeat(4, 40px); gap: 8px; padding: 4px 16px; }
.thumbs button { width: 40px; height: 40px; border-radius: 5px; background: #f8f9fb; }
.thumbs svg { width: 40px; height: 40px; overflow: visible; }
.thumbs text { font: 6px "Noto Sans", sans-serif; text-anchor: middle; }
.lbar { position: absolute; right: 2px; top: 0; width: 6px; height: 548px; border-radius: 3px; background: #dedfe4; }
.lfoot { flex: none; height: 56px; border-top: 1px solid #e8e8ec; padding: 11px 16px; }
.lfoot button { width: 100%; height: 32px; border-radius: 5px; background: #0080ff; color: #fff; justify-content: center; font-size: 11px; }

.work { display: grid; grid-template-columns: 18px 1fr 15px; grid-template-rows: 18px 1fr 15px 17px; min-width: 0; min-height: 0; }
.corner { border-right: 1px solid #e4e4e8; border-bottom: 1px solid #e4e4e8; }
.hruler { grid-column: 2; width: 100%; height: 18px; border-bottom: 1px solid #e4e4e8; }
.vruler { grid-row: 2; width: 18px; height: 100%; }
.hruler path, .vruler path { stroke: #dcdce2; }
.hruler text, .vruler text { font: 9px "Noto Sans", sans-serif; fill: #77777c; }
.canvas { grid-column: 2; grid-row: 2; background: #ebebf1; position: relative; overflow: hidden; }
.page { display: block; }
.page text { font-size: 12px; fill: #3a3a3a; }
.page .m { text-anchor: middle; }
.page .row { text-anchor: middle; font-size: 11px; }
.page .mm { text-anchor: middle; font-size: 10px; }
.page .r { font: 38px "Liberation Sans", sans-serif; fill: #3498db; stroke: #3498db; text-anchor: middle; }
.page .lg { font: 20px "Liberation Sans", sans-serif; fill: #4a6e9e; stroke: #4a6e9e; stroke-width: .600; text-anchor: middle; }
.g { fill: #a3cf62; }
.w { fill: #fff; }
.ln { stroke: #a3cf62; fill: none; }
.vscroll { grid-column: 3; grid-row: 1 / 3; padding: 77px 0 0 3px; }
.vscroll i { display: block; width: 10px; height: 230px; border-radius: 5px; background: #d0d1d4; }
.hscroll { grid-column: 1 / 4; padding: 3px 237px 0 179px; border-top: 1px solid #e4e4e8; border-bottom: 1px solid #e4e4e8; }
.hscroll i { display: block; height: 10px; border-radius: 5px; background: #d0d1d4; }
.colors { grid-column: 1 / 4; display: flex; align-items: center; padding-left: 10px; }
.colors button { width: 25px; gap: 1px; }
.sw { flex: 1; display: flex; gap: 2px; height: 14px; }
.sw button { flex: 1; width: 0; border-radius: 2px; }

.wsearch { position: absolute; left: 1002px; top: 84px; width: 188px; height: 25px; border: 1px solid #111; border-radius: 4px; background: #fff; display: flex; align-items: center; gap: 6px; padding-left: 3px; }
.wsearch .i { color: #55565a; }
.wsearch input { width: 120px; color: #000; font-size: 13px; }
.login { position: absolute; left: 461px; top: 279px; width: 351px; height: 212px; background: #2ba1bf; color: #fff; font: 10px/14px "Liberation Sans", sans-serif; padding: 11px 51px 0 54px; }
.login label { display: block; height: 19px; }
.fld { height: 28px; background: #fff; margin-bottom: 12px; display: flex; align-items: center; padding: 0 8px 0 4px; }
.f2 { height: 27px; margin-bottom: 9px; }
.fld svg { width: 16px; height: 18px; fill: #3498db; }
.fld .eye { width: 14px; height: 12px; }
.fld input { flex: 1; min-width: 0; color: #333; }
.login .rem { display: flex; align-items: center; gap: 6px; padding-left: 7px; font-size: 7px; height: 12px; }
.rem input { appearance: none; width: 9px; height: 9px; background: #fff; }
.login button { width: 100%; height: 32px; margin-top: 13px; background: #fff; color: #3498db; justify-content: center; font-family: "Open Sans", sans-serif; font-weight: 800; font-size: 17px; }
.login a { display: block; text-align: center; font-size: 7px; margin: 3px 0 0 4px; }
.handles { position: absolute; left: 457px; top: 275px; width: 359px; height: 220px; }
.rot { position: absolute; left: 630px; top: 248px; width: 12px; height: 12px; fill: none; stroke: #1a8fd0; stroke-width: 1.500; }
.pop { position: absolute; left: 594px; top: 141px; width: 88px; height: 78px; background: #fff; border-radius: 7px; box-shadow: 0 3px 10px rgba(0,0,0,.14); padding-top: 14px; }
.pop button { width: 68px; font-size: 10px; line-height: 13px; white-space: normal; display: block; text-align: center; }
.pop button .i { display: block; margin: 0 auto 12px; }
.pop > .i { position: absolute; width: 12px; height: 12px; right: 6px; color: #8a8a8e; }
.pin { top: 6px; }
.shr { bottom: 6px; }
.aifloat { position: absolute; right: 16px; bottom: 16px; width: 88px; height: 40px; border-radius: 20px; background: #fff; box-shadow: 0 3px 10px rgba(0,0,0,.14); display: flex; align-items: center; justify-content: center; gap: 11px; }
.aifloat > i { width: 1px; height: 24px; background: #e2e2e6; }
.aifloat button svg { width: 20px; height: 20px; }
.aifloat button .i { width: 18px; height: 18px; }

.rail2 { border: 1px solid #e8e8ec; border-width: 0 1px; display: flex; flex-direction: column; align-items: center; }
.rail2 button { width: 35px; height: 35px; justify-content: center; margin-bottom: 10px; }
.rail2 button:first-child { height: 32px; margin-bottom: 0; }
.rail2 .on { background: #0080ff; }
.rail2 .on .i { color: #fff; }
.rail2 .end { margin: auto 0 -1px; }
.ptabs { height: 33px; border-bottom: 1px solid #e8e8ec; display: grid; grid-template-columns: 88px 76px 72px; line-height: 34px; text-align: center; }
.ptabs .on { color: #0a80ff; }
.pbody { padding: 8px 21px 0 20px; }
.rad { height: 32px; display: flex; align-items: center; gap: 10px; white-space: nowrap; margin-right: -12px; }
.rad input { appearance: none; width: 14px; height: 14px; border: 1px solid #dcdce0; border-radius: 7px; }
.rad input:checked { border: 4px solid #0a80ff; }
.prow { display: flex; align-items: center; justify-content: space-between; height: 24px; }
.prow.c { margin: 7px 0 12px; }
.prow.c span, .pl { font-feature-settings: normal; }
.cbtn { width: 63px; height: 24px; border: 1px solid #dddde2; border-radius: 5px; padding: 2px; }
.cbtn i { width: 100%; height: 18px; border-radius: 3px; background: #2ba1bf; border: 1px solid #238aa5; }
.pl { display: block; height: 31px; padding-top: 5px; }
.pl ~ .pl { margin-top: 12px; }
.spin { width: 63px; height: 24px; border: 1px solid #e2e2e7; border-radius: 5px; display: flex; align-items: center; padding: 0 5px 0 7px; }
.spin input { flex: 1; min-width: 0; }
.spin span { display: flex; flex-direction: column; gap: 6px; }
input[type=range] { appearance: none; width: 110px; height: 14px; background: linear-gradient(#dedede, #dedede) center / 100% 6px no-repeat; border-radius: 3px; }
input[type=range]::-webkit-slider-thumb { appearance: none; width: 14px; height: 14px; border-radius: 7px; background: #fff; border: 2px solid #559fee; }
.half { background: linear-gradient(90deg, #0a80ff 50%, #dedede 50%) center / 100% 6px no-repeat !important; }

.status { background: #f2f3f9; display: flex; align-items: center; padding-top: 4px; }
.c1, .c2, .c3, .c4 { border-right: 1px solid #dcdde3; height: 22px; }
.c1 { width: 43px; justify-content: center; }
.c2 { width: 129px; display: flex; align-items: center; padding: 0 12px 0 17px; }
.c2 select { flex: 1; line-height: 20px; }
.c3 { width: 41px; justify-content: center; }
.c4 { width: 73px; line-height: 22px; text-align: center; color: #0a80ff; }
.cell { height: 22px; line-height: 22px; border-left: 1px solid #dcdde3; display: flex; align-items: center; white-space: nowrap; }
.n1 { margin-left: auto; width: 108px; padding-left: 8px; }
.n2 { width: 86px; padding-left: 8px; }
.view { width: 184px; padding-left: 11px; gap: 13px; }
.view button { gap: 4px; }
.view button:last-child { margin-left: -2px; }
.zoomc { width: 223px; padding-left: 7px; gap: 7px; }
.zoomc input[type=range] { width: 96px; background: linear-gradient(90deg, #46464a 25%, #fff 25%) center / 100% 4px no-repeat; }
.zoomc input::-webkit-slider-thumb { width: 12px; height: 12px; border-color: #46464a; }
.zoomc button { gap: 8px; font-size: 11px; }
.zoomc button:last-child { margin-left: 7px; }
.fits { width: 80px; padding-left: 10px; gap: 15px; }
```
FILE: app.js
```js
const $ = id => document.getElementById(id);

// rulers: ten units span 642/17 pixels
const STEP = 642 / 17;
let h = '';
for (let n = -1; n <= 34; n++) {
  const x = Math.round(44.6 + n * STEP), m = Math.round(44.6 + (n + .5) * STEP);
  h += `<path d="M${x}.5 0v18M${m}.5 10v8"/><text x="${x + 2}" y="10">${n * 10}</text>`;
}
$('hruler').innerHTML = h;
let v = '';
for (let n = 2; n <= 23; n++) {
  const y = Math.round(27 + (n - 3) * STEP), m = Math.round(27 + (n - 2.5) * STEP);
  v += `<path d="M0 ${y}.5h18M11 ${m}.5h7"/><text text-anchor="end" transform="translate(9 ${y + 1}) rotate(-90)">${n * 10}</text>`;
}
v += '<path d="M17.500 0v900"/>';
$('vruler').innerHTML = v;

// list rows and captions of the wireframe; the login form covers the first four dates
let rows = '', t = '';
const rowY = [[566, 22], [596, 22], [626, 23], [657, 22], [729, 23], [759, 23], [790, 22], [820, 23], [850, 23]];
rowY.forEach(([y, hh], k) => {
  rows += `<path d="M367 ${y}h452v${hh}H367zM881 ${y}h113v${hh}H881z"/>`;
  t += `<text class="row" x="592" y="${y + 16}">ここにテキストを入力してください</text>`;
  if (k > 3) t += `<text class="m" x="937" y="${y + 16}">日付</text>`;
});
$('rows').innerHTML = rows;
for (const [x, y] of [[920, 235], [453, 423], [641, 423], [828, 423], [1014, 423], [1200, 423], [1385, 423], [1238, 698]])
  t += `<rect x="${x - 33}" y="${y - 9}" width="66" height="18" fill="#fff"/><text class="m" x="${x}" y="${y + 5}">説明テキスト</text>`;
for (let k = 0; k < 11; k++)
  t += `<text class="mm" x="${429 + 96 * k}" y="316">メニュー項目</text><path d="M${480 + 96 * k} 305v16" stroke="#7a7f7c" stroke-width="2"/>`;
$('dtext').innerHTML = t;

// palette
const colors = 'b01020 cc1033 ea4761 fc6a7a fa9cb0 298090 2ba1c0 3fbfdf 5cd6f0 a5ecfc f8472f ff7f40 ff9820 ffb818 ffc95e 149880 18b89e 18ceb3 68dac8 84ecdc 9b2c60 c84d8c e866a8 fc88c8 f0c4da 5f8a14 74a22a 9abe28 b4d250 d4e090 1f28ae 3541da 6848fa 9068fa b090fa ffc800 f9dd2f f9e32e fdf350 ffff88 9c50e0 c250e8 d46cff bc84ff dda4ff 2e8048 38a060 50b47c 56b883 94dcb0 e83828 ff4c34 ff6464 ff6c7c ff9490 2744a4 3058d0 3868f8 6890ff 8ab0f8 78300c 983c00 a84428 d46040 e07858 1a90e0 2898ff 48b0ff 40d0ff 70e8ff 785034 985440 b87048 e07c54 f89c70 90807a b8b09c ccc0b4 e4dfcc f4ecd4 202020 303030 444444 555555 7c7c7c bbbbbb cccccc d8d8d8 e4e4e4 f0f0f0 ffffff';
$('sw').innerHTML = colors.split(' ').map(c => `<button aria-label="#${c}" style="background:#${c}"></button>`).join('');

// symbol thumbnails, each drawn on a 40 x 40 field
const B = '#3498db', G = '#e6e8ee', N = '#50709f';
const r = (x, y, w, hh, f = B, s = '', rx = 0) => `<rect x="${x}" y="${y}" width="${w}" height="${hh}" fill="${f}" rx="${rx}"${s ? ` stroke="${s}"` : ''}/>`;
const d = (p, s = B, w = 1, dash = '') => `<path d="${p}" fill="none" stroke="${s}" stroke-width="${w}" stroke-dasharray="${dash}"/>`;
const tx = (x, y, s, f = '#fff', z = 6) => `<text x="${x}" y="${y}" fill="${f}" style="font-size:${z}px">${s}</text>`;
const pic = (x, y, w, hh, c = '#fff') => r(x, y, w, hh, 'none', c, 1) + `<path d="M${x + 2} ${y + hh - 2}l${w * .25}-${hh * .5} ${w * .2} ${hh * .2} ${w * .2}-${hh * .3} ${w * .15} ${hh * .6}z" fill="${c}"/>`;
const dia = (x, y) => `<path d="M${x} ${y - 3}l3 3-3 3-3-3z" fill="#ffee44" stroke="#777720"/>`;
const lines = (x, y, w, n, c = N) => `<g opacity=".7">${Array.from({ length: n }, (_, k) => d(`M${x + k % 2} ${y + k * 2}.5h${w - (k === n - 1 ? w >> 2 : k % 3)}`, c, 1, `${6 + k % 3} 1 ${4 + k % 2} 1`)).join('')}</g>`;
const pane = (x, w, bg, tint) => r(x, 2, w, 36, bg) + [12, 19, 25, 31].map((y, k) => r(x + 3, y, w - 6, 4, k === 2 ? '#fff' : 'none', tint)).join('');
const T = [
  r(2, 19, 36, 2), r(2, 19, 36, 2) + r(29, 20, 7, 1, '#fff'), r(2, 20, 36, 1, G) + r(6, 19, 5, 2), d('M5 20h33', B, 1, '3 4'),
  r(2, 19, 36, 3) + r(26, 20, 10, 1, '#bbb'), d('M4 20.500h22', B, 1, '3 1') + r(26, 19, 10, 2, N), d('M4 20.500h33', B, 1, '3 3') + r(17, 19, 4, 3), d('M3 19h31', N, 2, '5 1') + r(2, 20, 36, 2),
  d('M2 20.500h36', B, 1, '2 2') + r(20, 19, 6, 3), r(3, 18, 34, 4) + d('M5 20h30', '#bcd', 1, '4 2'), d('M4 20.500h33', N, 1, '4 2'), r(2, 18, 36, 4, N, '', 2) + r(10, 18, 6, 4) + d('M4 20h30', '#fff', 1, '3 3') + dia(3, 3),
  r(6, 2, 28, 35, '#fff', B) + [6, 11, 17, 25, 30].map(y => r(9, y, 22, 3, '#fff', B)).join(''),
  r(5, 2, 30, 36, G) + r(12, 2, 18, 4) + lines(10, 10, 20, 2) + lines(8, 18, 24, 1) + r(14, 22, 13, 4, '#fff', B, 2) + `<g fill="#999"><circle cx="15" cy="31" r="2"/><circle cx="20" cy="31" r="2"/><circle cx="25" cy="31" r="2"/></g>`,
  r(2, 9, 36, 22, G) + r(6, 12, 28, 4, '#fff', N) + r(6, 17, 28, 3, '#fff', N) + r(5, 22, 30, 5),
  r(2, 9, 36, 22) + r(7, 13, 26, 3, '#fff') + r(7, 19, 26, 3, '#fff') + r(12, 25, 16, 4, '#fff'),
  r(2, 18, 36, 4) + d('M4 20h32', '#fff', 2, '9 2'), `<circle cx="20" cy="20" r="16" fill="${B}"/>` + pic(14, 15, 13, 10), r(4, 4, 32, 32) + pic(13, 13, 14, 13), r(5, 4, 31, 32, G) + r(5, 4, 31, 10) + r(14, 19, 12, 11) + pic(16, 21, 8, 7),
  r(4, 4, 32, 32) + d('M11 20l6 6 12-13', '#fff', 2), `<circle cx="20" cy="20" r="16" fill="${B}"/>` + tx(20, 22, 'Button'), `<circle cx="20" cy="20" r="15" fill="#fff" stroke="${B}"/>` + tx(20, 22, 'Button', B), r(2, 15, 36, 11) + tx(20, 22, 'Button', '#fff', 4),
  r(3, 15, 35, 10, '#fff', B) + tx(20, 22, 'Button', B, 4), r(2, 14, 36, 12, B, '', 3) + tx(20, 22, 'Button', '#fff', 4) + dia(3, 3), r(3, 15, 34, 10, '#fff', B, 3) + tx(20, 22, 'Button', B, 4), r(3, 14, 35, 12, B, '', 6) + tx(20, 22, 'Button', '#fff', 4),
  r(3, 14, 34, 11, '#fff', B, 5) + tx(20, 22, 'Button', B, 4), d('M2 18h36', B, 1) + [8, 20, 32].map(x => `<circle cx="${x}" cy="18" r="2.500" fill="#fff" stroke="${B}"/>`).join('') + d('M6 23h29', N, 1, '4 8'),
  [13, 20, 27].map(y => `<circle cx="4" cy="${y}" r="2" fill="${B}"/>` + lines(8, y - 1, 27, 2)).join(''), [12, 20, 28].map(y => r(2, y - 3, 6, 6) + d(`M3 ${y}l2 2 2-4`, '#fff') + lines(10, y - 2, 24, 2)).join(''),
  [13, 20, 27].map(y => r(2, y - 2, 5, 5) + r(4, y, 1, 1, '#fff') + lines(10, y - 1, 26, 2)).join(''), r(3, 9, 35, 22, '#fff', '#cfd3da') + lines(12, 13, 16, 1) + lines(7, 17, 26, 3, B) + r(13, 24, 14, 5), r(5, 2, 31, 36, G) + r(5, 2, 31, 18) + pic(15, 7, 11, 9) + lines(9, 23, 22, 4) + r(9, 32, 10, 4, N) + r(22, 32, 10, 4, '#fff', N), r(2, 15, 36, 10, G) + r(2, 15, 11, 10) + r(6, 18, 4, 4, '#fff') + lines(14, 17, 22, 3),
  r(2, 15, 36, 10, G) + r(2, 15, 15, 10) + r(7, 18, 4, 4, '#fff') + lines(18, 17, 18, 3), r(2, 9, 36, 22) + `<circle cx="20" cy="20" r="4" fill="none" stroke="#fff"/><path d="M19 18l3 2-3 2z" fill="#fff"/>`, r(5, 4, 31, 33) + [[20, 11], [23, 13], [23, 17], [20, 19], [17, 17], [17, 13], [20, 15]].map(([x, y]) => `<circle cx="${x}" cy="${y}" r="2.500" fill="#fff"/>`).join('') + tx(20, 27, 'TEXT', '#fff', 4), r(5, 2, 31, 36, G) + r(5, 2, 31, 18) + pic(15, 7, 11, 9) + lines(8, 26, 24, 4),
  r(2, 9, 36, 26, G, '#707a94') + d('M3 9v-2h28v2', '#707a94') + lines(5, 14, 22, 1, B) + lines(5, 19, 22, 5), r(2, 16, 36, 8, G) + r(2, 19, 36, 2, N) + r(2, 16, 36, 1) + r(2, 23, 36, 1), r(4, 5, 32, 30, '#fff', B) + r(4, 5, 32, 5) + [12, 18, 23, 29].map(y => r(6, y, 4, 4, '#fff', B) + lines(12, y + 1, 22, 2)).join(''), r(7, 2, 28, 35, '#fff') + r(7, 2, 28, 14) + `<circle cx="20" cy="16" r="4" fill="#fff"/><circle cx="20" cy="16" r="2" fill="${B}"/>` + lines(11, 26, 19, 3),
  pane(6, 29, B, '#cfe6f8'), r(9, 2, 23, 36) + [9, 14, 19, 24, 29, 33].map(y => r(11, y, 19, 3, '#fff')).join(''), r(9, 2, 23, 36) + r(9, 2, 23, 4, G) + r(11, 13, 19, 4, '#fff') + d('M17 21h6M17 25h6M17 29h6M17 33h6', '#cfe6f8'), pane(6, 29, G, B) + r(9, 19, 23, 4),
  '', '', '', ''
];
$('thumbs').innerHTML = T.map((s, k) => `<button aria-label="シンボル ${k + 1}"><svg viewBox="0 0 40 40">${s}</svg></button>`).join('');
```
